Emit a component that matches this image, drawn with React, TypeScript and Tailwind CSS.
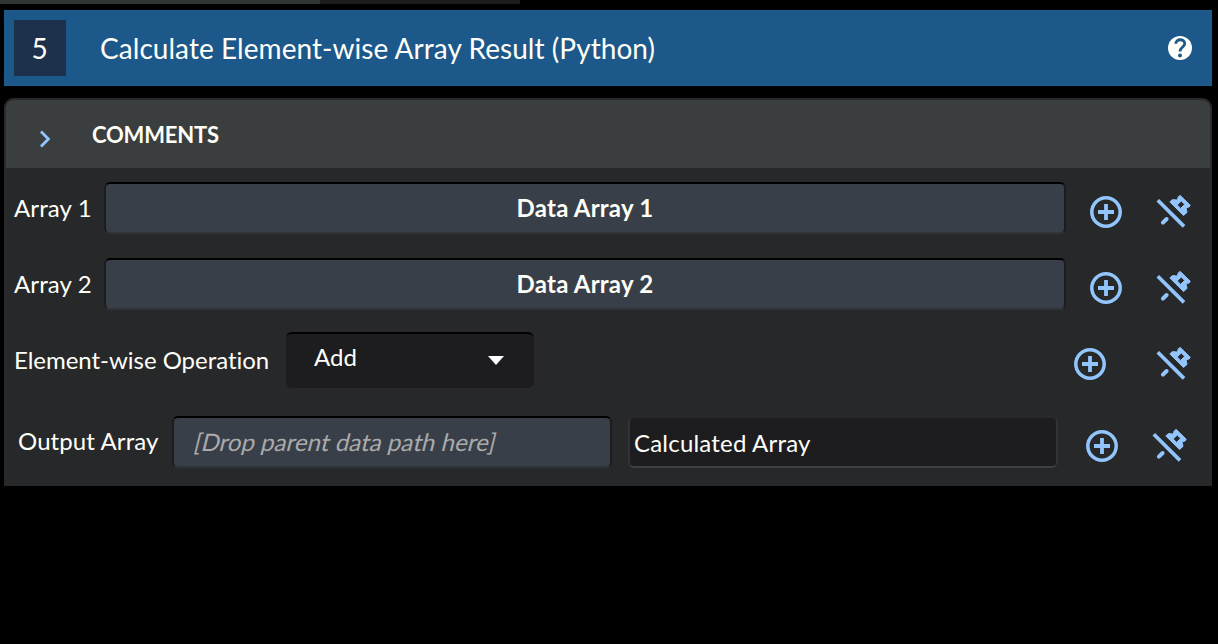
import React from "react";

function AddIcon() {
  return (
    <svg viewBox="0 0 32 32" className="h-8 w-8 shrink-0" fill="none" stroke="#93c5fd">
      <circle cx="16" cy="16" r="14.2" strokeWidth="3.5" />
      <path d="M16 8v16M8 16h16" strokeWidth="3.8" />
    </svg>
  );
}

function PinOffIcon() {
  return (
    <svg viewBox="0 0 36 36" className="h-9 w-9 shrink-0">
      <g stroke="#93c5fd" strokeWidth="3.7" fill="none">
        <path d="M1.8 6.2L28 32.4" />
        <path d="M6.9 28.7L10.6 25" strokeWidth="4" strokeLinecap="round" />
      </g>
      <path
        fill="#93c5fd"
        stroke="#93c5fd"
        strokeWidth="1"
        strokeLinejoin="round"
        fillRule="evenodd"
        d="M24.2 1.4L34.2 11.2L33.2 13L30 13.6L31 18.4L27.5 21.5L13.8 7.9L16.5 5.6L21.4 6.1L22.2 2.9ZM25.2 7L21.2 10.9L24.6 14.4L28.7 10.3Z"
      />
    </svg>
  );
}

function Actions({ className }: { className: string }) {
  return (
    <div className={`ml-auto flex items-center ${className}`}>
      <AddIcon />
      <PinOffIcon />
    </div>
  );
}

const dropBox =
  "box-border flex h-[52px] items-center rounded-[6px] border-2 border-t-black border-x-[#1c1d1f] border-b-[#2f3437] bg-[#383f49]";

function ArrayRow({ label, value }: { label: string; value: string }) {
  return (
    <div className="flex h-[76px] items-start pl-[10px] pt-[14px]">
      <span className="w-[90px] whitespace-nowrap leading-[52px] tracking-[0.1px]">{label}</span>
      <div className={`${dropBox} w-[962px] justify-center font-bold tracking-[0.22px]`}>{value}</div>
      <Actions className="gap-[34px] pr-[20px] pt-[12px]" />
    </div>
  );
}

export default function App() {
  return (
    <main className="h-[644px] w-[1218px] overflow-hidden bg-black font-['Lato',sans-serif] text-[24px] text-[#fffff8] [font-variant-ligatures:none]">
      <div className="flex h-[10px] items-start">
        <div className="h-1 w-80 bg-[#303434]" />
        <div className="h-1 w-[200px] bg-[#1c1c1e]" />
      </div>

      <header className="ml-1 flex h-[76px] w-[1208px] items-center bg-[#1d588b] pl-[10px] pr-[20px]">
        <div className="flex h-14 w-[52px] items-center justify-center bg-[#1d304c] pr-px text-[28px]">5</div>
        <h1 className="ml-[34px] whitespace-nowrap text-[28px] tracking-[0.05px]">Calculate Element-wise Array Result (Python)</h1>
        <svg viewBox="0 0 24 24" className="ml-auto h-6 w-6">
          <circle cx="12" cy="12" r="12" fill="#fffffb" />
          <path d="M7.8 7.8C7.8 2.4 16.7 2.4 16.7 7.7C16.7 10.9 12 11.2 12 15.5" fill="none" stroke="#1d588b" strokeWidth="2.8" />
          <circle cx="12" cy="19.5" r="2" fill="#1d588b" />
        </svg>
      </header>

      <section className="ml-1 mt-3 w-[1208px] rounded-t-[10px] bg-[#27282a]">
        <div className="flex h-[70px] items-center rounded-t-[10px] border-x-2 border-t-2 border-[#27292a] bg-[#3b3e3f]">
          <svg viewBox="0 0 12 18" className="ml-[33px] mt-[9px] h-[18px] w-3" fill="none" stroke="#93c5fd" strokeWidth="2.8">
            <path d="M2 1.4L9.4 9L2 16.6" />
          </svg>
          <h2 className="ml-[41px] text-[22px] font-bold tracking-[-0.2px]">COMMENTS</h2>
        </div>

        <ArrayRow label="Array 1" value="Data Array 1" />
        <ArrayRow label="Array 2" value="Data Array 2" />

        <div className="flex h-[80px] items-start pl-[10px] pt-[12px]">
          <span className="w-[272px] whitespace-nowrap pt-[2px] leading-[52px] tracking-[-0.03px]">Element-wise Operation</span>
          <div className="flex h-14 w-[248px] items-center rounded-[6px] border-t-2 border-black bg-[#1d1d1f] pl-7 pr-[30px]">
            <span className="-mt-[8px]">Add</span>
            <svg viewBox="0 0 16 9" className="-mt-[2px] ml-auto h-[9px] w-4" fill="#ffffff">
              <path d="M0 0H16L8 9Z" />
            </svg>
          </div>
          <Actions className="gap-[50px] pr-[20px] pt-[14px]" />
        </div>

        <div className="flex h-[86px] items-start pl-[14px] pt-4">
          <span className="w-[154px] whitespace-nowrap leading-[50px] tracking-[0.1px]">Output Array</span>
          <div className={`${dropBox} w-[440px] pl-[21px] text-[#aaaaaa]`}>
            <span className="-skew-x-14 whitespace-nowrap tracking-[0.05px]">[Drop parent data path here]</span>
          </div>
          <div className="ml-4 box-border flex h-[52px] w-[430px] items-center rounded-[6px] border-2 border-t-[#27282a] border-x-[#303335] border-b-[#3d3f41] bg-[#1d1d1f] pl-[4px] pt-px tracking-[0.2px]">
            Calculated Array
          </div>
          <Actions className="gap-[34px] pr-[24px] pt-[12px]" />
        </div>
      </section>
    </main>
  );
}
